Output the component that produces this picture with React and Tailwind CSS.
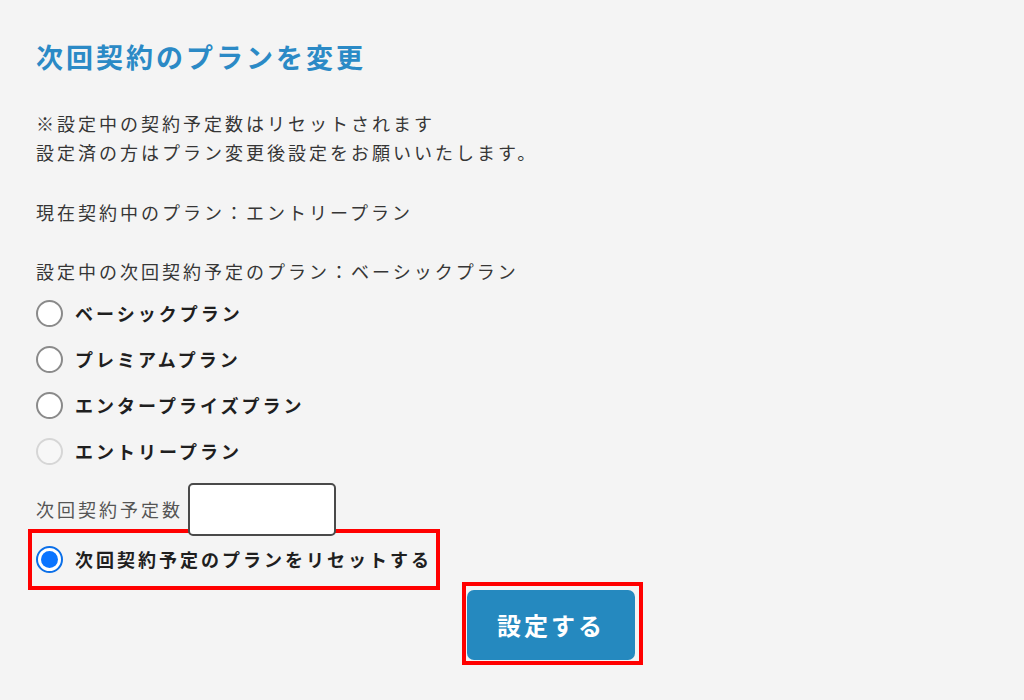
import React from 'react'

const jp = { fontFamily: '"Noto Sans CJK JP", "Noto Sans", sans-serif' }

const Radio = ({ state }) => {
  if (state === 'checked') {
    return (
      <span className="w-[27px] h-[27px] rounded-full border-2 border-[#0b6fe8] bg-white flex items-center justify-center shrink-0">
        <span className="w-[17px] h-[17px] rounded-full bg-[#0a74ff]" />
      </span>
    )
  }
  if (state === 'disabled') {
    return <span className="w-[27px] h-[27px] rounded-full border-2 border-[#d6d6d6] bg-[#f7f7f7] shrink-0" />
  }
  return <span className="w-[27px] h-[27px] rounded-full border-2 border-[#8a8a8a] bg-white shrink-0" />
}

const plans = [
  { name: 'ベーシックプラン', state: 'off' },
  { name: 'プレミアムプラン', state: 'off' },
  { name: 'エンタープライズプラン', state: 'off' },
  { name: 'エントリープラン', state: 'disabled' },
]

const App = () => {
  return (
    <div className="w-[1024px] h-[700px] bg-[#f4f4f4] overflow-hidden text-[#363636]" style={jp}>
      <div className="pl-[36px] pt-[39px]">
        <h1 className="text-[27px] leading-[36px] font-bold text-[#2b8ac6] tracking-[3px]">
          次回契約のプランを変更
        </h1>

        <div className="mt-[34px] text-[18px] leading-[29px] tracking-[3px]">
          <p>※設定中の契約予定数はリセットされます</p>
          <p>設定済の方はプラン変更後設定をお願いいたします。</p>
          <p className="mt-[31px]">現在契約中のプラン：エントリープラン</p>
          <p className="mt-[30px]">設定中の次回契約予定のプラン：ベーシックプラン</p>
        </div>

        <div className="mt-[4px] flex flex-col">
          {plans.map((p) => (
            <label key={p.name} className="h-[46px] flex items-center gap-[12px]">
              <Radio state={p.state} />
              <span className="text-[18px] font-bold tracking-[3px] text-[#1f1f1f]">{p.name}</span>
            </label>
          ))}
        </div>

        <div className="mt-[9px] flex items-center gap-[5px]">
          <span className="text-[18px] tracking-[3px] text-[#555]">次回契約予定数</span>
          <input className="w-[148px] h-[53px] rounded-[5px] border-2 border-[#4a4a4a] bg-white" />
        </div>
      </div>

      <div className="ml-[28px] mt-[-7px] w-[412px] h-[61px] border-4 border-[#ff0000] flex items-center gap-[12px] pl-[4px]">
        <Radio state="checked" />
        <span className="text-[18px] font-bold tracking-[3px] text-[#1f1f1f]">次回契約予定のプランをリセットする</span>
      </div>

      <div className="ml-[462px] mt-[-8px] w-[181px] h-[83px] border-4 border-[#ff0000] pl-[1px] pt-[4px]">
        <button className="w-[168px] h-[70px] rounded-[7px] bg-[#2589bf] text-white text-[24px] font-bold tracking-[3px]">
          設定する
        </button>
      </div>
    </div>
  )
}

export default App
